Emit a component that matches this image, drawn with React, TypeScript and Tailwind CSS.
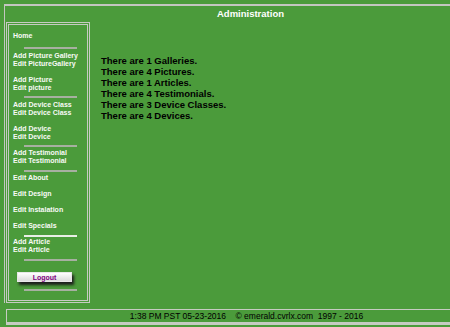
import React from 'react'

function Sep({ light, mt }: { light?: boolean; mt: string }) {
  return (
    <div
      className={`${mt} ml-[11px] w-[53px] h-[2px] ${
        light ? 'bg-[#e9eee6]' : 'bg-[#a7b0a1]'
      }`}
    />
  )
}

function Item({ children, mt }: { children: React.ReactNode; mt?: string }) {
  return <div className={`${mt ?? ''} h-[8px] leading-[8px] whitespace-nowrap`}>{children}</div>
}

export default function App() {
  return (
    <div className="w-[450px] h-[327px] overflow-hidden bg-[#4b9b3b] font-['Liberation_Sans',Arial,sans-serif]">
      {/* Outer frame */}
      <div className="ml-[4px] mt-[4px] w-[492px] border-l border-t-2 border-[#c3c6c0]">
        <div className="h-[16px] flex items-center justify-center text-[9.5px] font-bold text-white leading-none">
          Administration
        </div>
        <div className="flex">
          {/* Sidebar */}
          <div className="ml-[1px] w-[84px] h-[281px] border-[3px] border-double border-[#c6cbc2] text-[7px] font-bold text-[#f8faf6]">
            <div className="pt-[7px] pl-[4px] flex flex-col">
              <Item>Home</Item>
              <Sep mt="mt-[7px]" />
              <Item mt="mt-[3px]">Add Picture Gallery</Item>
              <Item>Edit PictureGallery</Item>
              <Item mt="mt-[8px]">Add Picture</Item>
              <Item>Edit picture</Item>
              <Sep mt="mt-[4px]" />
              <Item mt="mt-[3px]">Add Device Class</Item>
              <Item>Edit Device Class</Item>
              <Item mt="mt-[8px]">Add Device</Item>
              <Item>Edit Device</Item>
              <Sep mt="mt-[4px]" />
              <Item mt="mt-[2px]">Add Testimonial</Item>
              <Item>Edit Testimonial</Item>
              <Sep mt="mt-[5px]" />
              <Item mt="mt-[2px]">Edit About</Item>
              <Item mt="mt-[8px]">Edit Design</Item>
              <Item mt="mt-[8px]">Edit Instalation</Item>
              <Item mt="mt-[8px]">Edit Specials</Item>
              <Sep light mt="mt-[5px]" />
              <Item mt="mt-[1px]">Add Article</Item>
              <Item>Edit Article</Item>
              <Sep mt="mt-[5px]" />
              <div className="mt-[11px] ml-[4px] w-[55px] h-[10px] flex items-center justify-center bg-gradient-to-b from-white to-[#dcdcdc] border border-[#e8e8e8] shadow-[2px_3px_3px_#1c1c1c] text-[#800080] leading-none">
                Logout
              </div>
              <Sep mt="mt-[7px]" />
            </div>
          </div>

          {/* Content */}
          <div className="pl-[11px] pt-[33px] text-[9.5px] leading-[11px] font-bold text-black">
            <div>There are 1 Galleries.</div>
            <div>There are 4 Pictures.</div>
            <div>There are 1 Articles.</div>
            <div>There are 4 Testimonials.</div>
            <div>There are 3 Device Classes.</div>
            <div>There are 4 Devices.</div>
          </div>
        </div>
      </div>

      {/* Footer */}
      <div className="ml-[6px] mt-[6px] w-[480px] h-[16px] border-l border-t border-b-[3px] border-b-double border-[#c6cbc2] flex items-center justify-center text-[8.5px] text-black leading-none whitespace-pre">
        {'1:38 PM PST 05-23-2016    \u00a9 emerald.cvrlx.com  1997 - 2016'}
      </div>
    </div>
  )
}
